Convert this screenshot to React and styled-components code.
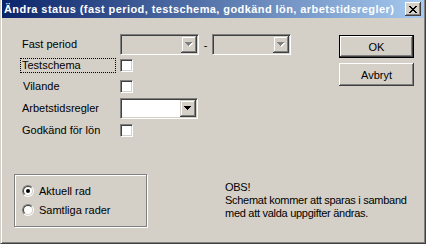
import React from "react"
import styled, { createGlobalStyle } from "styled-components"

const GlobalStyle = createGlobalStyle`
  html, body {
    margin: 0;
    padding: 0;
    background: #d4d0c8;
  }
  * {
    box-sizing: border-box;
  }
`

function Arrow({ disabled }) {
  const rows = [
    [0, 7],
    [1, 5],
    [2, 3],
    [3, 1],
  ]
  return (
    <svg width='8' height='5' viewBox='0 0 8 5' shapeRendering='crispEdges'>
      {disabled &&
        rows.map(([y, w], i) => (
          <rect key={"s" + i} x={i + 1} y={y + 1} width={w} height='1' fill='#fff' />
        ))}
      {rows.map(([y, w], i) => (
        <rect key={i} x={i} y={y} width={w} height='1' fill={disabled ? "#808080" : "#000"} />
      ))}
    </svg>
  )
}

function ComboBox({ width, disabled }) {
  return (
    <Combo $width={width} $disabled={disabled}>
      <DropButton>
        <Arrow disabled={disabled} />
      </DropButton>
    </Combo>
  )
}

function Radio({ checked, children }) {
  return (
    <RadioRow>
      <RadioCircle>
        <RadioInner>{checked && <RadioDot />}</RadioInner>
      </RadioCircle>
      <span>{children}</span>
    </RadioRow>
  )
}

function App() {
  return (
    <>
      <GlobalStyle />
      <Window>
        <TitleBar>
          <Title>Ändra status (fast period, testschema, godkänd lön, arbetstidsregler)</Title>
          <CloseButton>
            <svg width='8' height='7' viewBox='0 0 8 7' shapeRendering='crispEdges'>
              <path d='M0 0h2v1h-2zM6 0h2v1h-2zM1 1h2v1h-2zM5 1h2v1h-2zM2 2h4v1h-4zM3 3h2v1h-2zM2 4h4v1h-4zM1 5h2v1h-2zM5 5h2v1h-2zM0 6h2v1h-2zM6 6h2v1h-2z' fill='#000' />
            </svg>
          </CloseButton>
        </TitleBar>
        <Body>
          <Top>
            <Form>
              <Label>Fast period</Label>
              <Controls>
                <ComboBox width={79} disabled />
                <Dash>-</Dash>
                <ComboBox width={79} disabled />
              </Controls>

              <Label $focused>Testschema</Label>
              <Controls>
                <Checkbox />
              </Controls>

              <Label>
                <Nudge>Vilande</Nudge>
              </Label>
              <Controls>
                <Checkbox />
              </Controls>

              <Label>Arbetstidsregler</Label>
              <Controls>
                <ComboBox width={78} />
              </Controls>

              <Label>Godkänd för lön</Label>
              <Controls>
                <Checkbox />
              </Controls>
            </Form>
            <Buttons>
              <PushButton $isDefault>OK</PushButton>
              <PushButton>Avbryt</PushButton>
            </Buttons>
          </Top>
          <Bottom>
            <GroupBox>
              <Radio checked>Aktuell rad</Radio>
              <Radio>Samtliga rader</Radio>
            </GroupBox>
            <Note>
              OBS!
              <br />
              Schemat kommer att sparas i samband
              <br />
              med att valda uppgifter ändras.
            </Note>
          </Bottom>
        </Body>
      </Window>
    </>
  )
}

export default App

const Window = styled.div`
  width: 426px;
  height: 244px;
  display: flex;
  flex-direction: column;
  background: #d4d0c8;
  border-left: 1px solid #d4d0c8;
  border-right: 1px solid #404040;
  border-bottom: 1px solid #404040;
  box-shadow: inset 1px 0 0 #fff, inset -1px -1px 0 #808080;
  padding: 0 1px 1px 1px;
  font-family: "Liberation Sans", Arial, sans-serif;
  font-size: 11px;
  color: #000;
`

const TitleBar = styled.div`
  height: 18px;
  margin-bottom: 1px;
  display: flex;
  align-items: center;
  justify-content: space-between;
  padding: 0 3px 0 2px;
  background: linear-gradient(to right, #0a246a, #a6caf0);
`

const Title = styled.div`
  color: #fff;
  font-weight: 700;
  font-size: 11px;
  white-space: nowrap;
  letter-spacing: 0.42px;
`

const CloseButton = styled.div`
  width: 16px;
  height: 14px;
  flex-shrink: 0;
  display: flex;
  align-items: center;
  justify-content: center;
  background: #d4d0c8;
  box-shadow: inset -1px -1px 0 #404040, inset 1px 1px 0 #fff, inset -2px -2px 0 #808080;
`

const Body = styled.div`
  flex: 1;
  display: flex;
  flex-direction: column;
`

const Top = styled.div`
  display: flex;
  align-items: flex-start;
  padding-top: 15px;
`

const Form = styled.div`
  margin-left: 18px;
  flex: 0 0 271px;
  display: grid;
  grid-template-columns: 100px 171px;
  grid-template-rows: 21px 21px 21px 22px 22px;
  align-items: center;
`

const Label = styled.div`
  justify-self: start;
  line-height: 13px;
  padding: 0 2px 0 1px;
  border: 1px dotted ${(p) => (p.$focused ? "#000" : "transparent")};
  width: ${(p) => (p.$focused ? "96px" : "auto")};
`

const Nudge = styled.span`
  padding-left: 1px;
`

const Controls = styled.div`
  display: flex;
  align-items: center;
`

const Combo = styled.div`
  width: ${(p) => p.$width}px;
  min-width: ${(p) => p.$width}px;
  height: 21px;
  flex: 0 0 auto;
  display: flex;
  justify-content: flex-end;
  padding: 1px;
  background: ${(p) => (p.$disabled ? "#d4d0c8" : "#fff")};
  border-top: 1px solid #808080;
  border-left: 1px solid #808080;
  border-bottom: 1px solid #fff;
  border-right: 1px solid #fff;
  box-shadow: inset 1px 1px 0 #404040, inset -1px -1px 0 #d4d0c8;
`

const DropButton = styled.div`
  width: 16px;
  height: 17px;
  display: flex;
  align-items: center;
  justify-content: center;
  background: #d4d0c8;
  box-shadow: inset -1px -1px 0 #404040, inset 1px 1px 0 #d4d0c8, inset -2px -2px 0 #808080, inset 2px 2px 0 #fff;
`

const Dash = styled.span`
  width: 13px;
  flex-shrink: 0;
  text-align: center;
`

const Checkbox = styled.div`
  width: 13px;
  height: 13px;
  flex-shrink: 0;
  background: #fff;
  border-top: 1px solid #808080;
  border-left: 1px solid #808080;
  border-bottom: 1px solid #fff;
  border-right: 1px solid #fff;
  box-shadow: inset 1px 1px 0 #404040, inset -1px -1px 0 #d4d0c8;
`

const Buttons = styled.div`
  margin-left: auto;
  margin-right: 10px;
  margin-top: 1px;
  display: flex;
  flex-direction: column;
  gap: 5px;
`

const PushButton = styled.div`
  width: 75px;
  height: 23px;
  display: flex;
  align-items: center;
  justify-content: center;
  background: #d4d0c8;
  border: ${(p) => (p.$isDefault ? "1px solid #000" : "none")};
  box-shadow: inset -1px -1px 0 #404040, inset 1px 1px 0 #fff, inset -2px -2px 0 #808080;
`

const Bottom = styled.div`
  display: flex;
  align-items: flex-start;
  margin-top: 33px;
  padding-left: 12px;
`

const GroupBox = styled.div`
  width: 133px;
  height: 53px;
  padding: 6px 0 0 7px;
  border: 1px solid #808080;
  box-shadow: inset 1px 1px 0 #fff, 1px 1px 0 #fff;
  display: flex;
  flex-direction: column;
`

const RadioRow = styled.div`
  height: 19px;
  display: flex;
  align-items: center;
  gap: 5px;
`

const RadioCircle = styled.div`
  width: 12px;
  height: 12px;
  border-radius: 50%;
  border: 1px solid;
  border-color: #808080 #fff #fff #808080;
`

const RadioInner = styled.div`
  width: 10px;
  height: 10px;
  border-radius: 50%;
  border: 1px solid;
  border-color: #404040 #d4d0c8 #d4d0c8 #404040;
  background: #fff;
  display: flex;
  align-items: center;
  justify-content: center;
`

const RadioDot = styled.div`
  width: 4px;
  height: 4px;
  border-radius: 50%;
  background: #000;
`

const Note = styled.div`
  margin-left: 78px;
  margin-top: 7px;
  line-height: 13px;
  white-space: nowrap;
  letter-spacing: -0.28px;
`
